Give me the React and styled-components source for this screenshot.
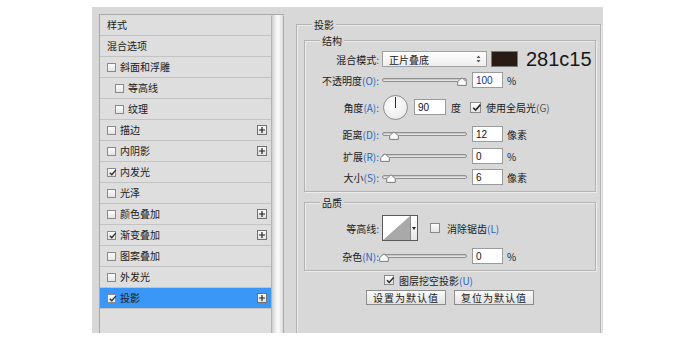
import React from "react";
import styled, { createGlobalStyle } from "styled-components";

const GlobalStyle = createGlobalStyle`
  html, body {
    margin: 0;
    padding: 0;
    background: #ffffff;
    font-family: "Noto Sans CJK SC", "Noto Sans", sans-serif;
    font-size: 10px;
    color: #1a1a1a;
  }
`;

const PANEL = "#d8d8d8";

const Page = styled.div`
  padding: 7px 0 0 92px;
  width: 690px;
  height: 345px;
  box-sizing: border-box;
`;

const Dialog = styled.div`
  width: 511px;
  height: 326px;
  background: ${PANEL};
  display: flex;
  align-items: flex-start;
  padding: 7px 0 0 7px;
  box-sizing: border-box;
  overflow: hidden;
`;

const ListBox = styled.div`
  display: flex;
  height: 330px;
  border-top: 1px solid #a8a8a8;
  border-left: 1px solid #a8a8a8;
  background: #dedede;
  flex-shrink: 0;
`;

const Items = styled.div`
  width: 171px;
  display: flex;
  flex-direction: column;
`;

const Item = styled.div`
  height: 20px;
  border-bottom: 1px solid #c3c3c3;
  display: flex;
  align-items: center;
  padding-left: ${p => (p.$indent ? 15 : 7)}px;
  padding-right: 4px;
  background: ${p => (p.$selected ? "#3a97f7" : "transparent")};
  line-height: 12px;
`;

const ItemText = styled.span`
  flex: 1;
  margin-left: ${p => (p.$box ? 4 : 0)}px;
  white-space: nowrap;
`;

const Scrollbar = styled.div`
  width: 11px;
  border-left: 1px solid #b3b3b3;
  border-right: 1px solid #a9a9a9;
  border-top-left-radius: 2px;
  border-top-right-radius: 2px;
  background: linear-gradient(to right, #cdcdcd, #f2f2f2 35%, #fbfbfb 60%, #dadada);
`;

const PlusBox = styled.span`
  width: 8px;
  height: 8px;
  border: 1px solid #707070;
  background: linear-gradient(#fbfbfb, #e1e1e1);
  display: flex;
  align-items: center;
  justify-content: center;
`;

const BoxWrap = styled.span`
  width: ${p => p.$size - 2}px;
  height: ${p => p.$size - 2}px;
  border: 1px solid #8a8a8a;
  background: linear-gradient(#fdfdfd, #e4e4e4);
  flex-shrink: 0;
  position: relative;
  display: inline-block;
`;

const CheckMark = styled.svg`
  position: absolute;
  left: 0;
  top: -1px;
`;

const Group = styled.div`
  position: relative;
  border: 1px solid #b2b2b2;
  box-shadow: inset 1px 1px 0 #ececec, 1px 1px 0 #ececec;
  margin-top: ${p => p.$mt || 0}px;
  padding: ${p => p.$pad};
  width: ${p => p.$w}px;
  height: ${p => (p.$h ? `${p.$h}px` : "auto")};
  box-sizing: border-box;
  flex-shrink: 0;
`;

const GroupTitle = styled.span`
  position: absolute;
  top: -7px;
  left: 15px;
  padding: 0 2px;
  background: ${PANEL};
  line-height: 13px;
`;

const Row = styled.div`
  display: flex;
  align-items: center;
  height: ${p => p.$h || 18}px;
  margin-top: ${p => p.$mt || 0}px;
  margin-left: ${p => p.$ml || 0}px;
  justify-content: ${p => p.$center ? "center" : "flex-start"};
  gap: ${p => p.$gap || 0}px;
`;

const Label = styled.span`
  width: 74px;
  margin-right: 3px;
  text-align: right;
  white-space: nowrap;
  flex-shrink: 0;
`;

const Key = styled.span`
  color: ${p => p.$c || "#2a64c0"};
`;

const Select = styled.div`
  width: 105px;
  height: 16px;
  box-sizing: border-box;
  border: 1px solid #a0a0a0;
  background: linear-gradient(#ffffff, #ededed);
  display: flex;
  align-items: center;
  justify-content: space-between;
  padding: 0 5px 0 6px;
`;

const Swatch = styled.div`
  width: 27px;
  height: 16px;
  margin-left: 4px;
  background: #281c15;
  box-sizing: border-box;
  border: 1px solid #7a7a7a;
`;

const HexText = styled.span`
  margin-left: 8px;
  font-family: "Liberation Sans", Arial, sans-serif;
  font-size: 20px;
  line-height: 20px;
  color: #161616;
`;

const SliderWrap = styled.div`
  position: relative;
  width: 85px;
  height: 16px;
  display: flex;
  align-items: center;
  flex-shrink: 0;
`;

const Track = styled.div`
  width: 100%;
  height: 4px;
  box-sizing: border-box;
  border: 1px solid #8f8f8f;
  border-radius: 2px;
  background: linear-gradient(#bdbdbd, #f1f1f1);
`;

const Handle = styled.svg`
  position: absolute;
  top: 5px;
`;

const Field = styled.div`
  width: ${p => p.$w || 31}px;
  height: 16px;
  box-sizing: border-box;
  border: 1px solid #9a9a9a;
  background: #ffffff;
  margin-left: ${p => p.$ml || 5}px;
  padding-left: 3px;
  display: flex;
  align-items: center;
  font-family: "Liberation Sans", Arial, sans-serif;
  font-size: 10px;
  color: ${p => p.$c || "#111"};
  flex-shrink: 0;
`;

const Unit = styled.span`
  margin-left: ${p => p.$ml || 4}px;
  white-space: nowrap;
`;

const Dial = styled.div`
  position: relative;
  width: 25px;
  height: 25px;
  margin-left: 1px;
  box-sizing: border-box;
  border-radius: 50%;
  border: 1px solid #8c8c8c;
  background: radial-gradient(circle at 40% 35%, #ffffff, #ececec 75%, #d6d6d6);
  flex-shrink: 0;

  &::after {
    content: "";
    position: absolute;
    left: 11px;
    top: 1px;
    width: 1px;
    height: 11px;
    background: #303030;
  }
`;

const Contour = styled.div`
  display: flex;
  height: 26px;
  box-sizing: border-box;
  border: 1px solid #5a5a5a;
  flex-shrink: 0;
`;

const ContourArrow = styled.div`
  width: 6px;
  border-left: 1px solid #8a8a8a;
  background: linear-gradient(#ffffff, #e6e6e6);
  display: flex;
  align-items: center;
  justify-content: center;
`;

const CheckText = styled.span`
  margin-left: ${p => p.$ml || 6}px;
  white-space: nowrap;
`;

const Button = styled.div`
  width: 80px;
  height: 15px;
  box-sizing: border-box;
  border: 1px solid #8c8c8c;
  background: linear-gradient(#fbfbfb, #e2e2e2);
  display: flex;
  align-items: center;
  justify-content: center;
  letter-spacing: 1px;
  line-height: 12px;
`;

const Checkbox = ({ checked, size = 9 }) => (
  <BoxWrap $size={size}>
    {checked && (
      <CheckMark width={size} height={size} viewBox="0 0 10 10">
        <path d="M2 5.2 L4.2 7.4 L8.6 2.4" fill="none" stroke="#2e2e2e" strokeWidth="1.5" />
      </CheckMark>
    )}
  </BoxWrap>
);

const Plus = () => (
  <PlusBox>
    <svg width="6" height="6" viewBox="0 0 6 6">
      <path d="M3 0 V6 M0 3 H6" stroke="#222" strokeWidth="1.2" />
    </svg>
  </PlusBox>
);

const Slider = ({ pos }) => (
  <SliderWrap>
    <Track />
    <Handle width="10" height="9" viewBox="0 0 10 9" style={{ left: pos - 5 }}>
      <path d="M5 0.8 L9.3 4.6 V8.4 H0.7 V4.6 Z" fill="#fafafa" stroke="#7c7c7c" strokeWidth="1" />
    </Handle>
  </SliderWrap>
);

const styles = [
  { name: "样式" },
  { name: "混合选项" },
  { name: "斜面和浮雕", box: true },
  { name: "等高线", box: true, indent: true },
  { name: "纹理", box: true, indent: true },
  { name: "描边", box: true, plus: true },
  { name: "内阴影", box: true, plus: true },
  { name: "内发光", box: true, checked: true },
  { name: "光泽", box: true },
  { name: "颜色叠加", box: true, plus: true },
  { name: "渐变叠加", box: true, checked: true, plus: true },
  { name: "图案叠加", box: true },
  { name: "外发光", box: true },
  { name: "投影", box: true, checked: true, plus: true, selected: true },
];

const StyleList = () => (
  <ListBox>
    <Items>
      {styles.map(s => (
        <Item key={s.name} $indent={s.indent} $selected={s.selected}>
          {s.box && <Checkbox checked={s.checked} />}
          <ItemText $box={s.box}>{s.name}</ItemText>
          {s.plus && <Plus />}
        </Item>
      ))}
    </Items>
    <Scrollbar />
  </ListBox>
);

export default function App() {
  return (
    <>
      <GlobalStyle />
      <Page>
        <Dialog>
          <StyleList />
          <Group $mt={10} $w={305} $h={330} $pad="15px 4px 0 7px" style={{ marginLeft: 12 }}>
            <GroupTitle>投影</GroupTitle>

            <Group $w={292} $pad="9px 0 5px 0">
              <GroupTitle>结构</GroupTitle>
              <Row>
                <Label>混合模式<Key>:</Key></Label>
                <Select>
                  <span>正片叠底</span>
                  <svg width="5" height="8" viewBox="0 0 5 8">
                    <path d="M2.5 0.5 L4.5 3 H0.5 Z M2.5 7.5 L4.5 5 H0.5 Z" fill="#555" />
                  </svg>
                </Select>
                <Swatch />
                <HexText>281c15</HexText>
              </Row>
              <Row $mt={3}>
                <Label>不透明度<Key>(O):</Key></Label>
                <Slider pos={80} />
                <Field $c="#1c2a8c">100</Field>
                <Unit>%</Unit>
              </Row>
              <Row $h={26} $mt={5}>
                <Label>角度<Key>(A):</Key></Label>
                <Dial />
                <Field $w={32} $ml={6}>90</Field>
                <Unit $ml={5}>度</Unit>
                <span style={{ width: 9 }} />
                <Checkbox checked size={11} />
                <CheckText $ml={5}>使用全局光<Key $c="#555">(G)</Key></CheckText>
              </Row>
              <Row $mt={5}>
                <Label>距离<Key>(D):</Key></Label>
                <Slider pos={12} />
                <Field>12</Field>
                <Unit>像素</Unit>
              </Row>
              <Row $mt={4}>
                <Label>扩展<Key>(R):</Key></Label>
                <Slider pos={3} />
                <Field>0</Field>
                <Unit>%</Unit>
              </Row>
              <Row $mt={3}>
                <Label>大小<Key>(S):</Key></Label>
                <Slider pos={9} />
                <Field>6</Field>
                <Unit>像素</Unit>
              </Row>
            </Group>

            <Group $w={292} $mt={10} $pad="12px 0 5px 0">
              <GroupTitle>品质</GroupTitle>
              <Row $h={26}>
                <Label>等高线<Key>:</Key></Label>
                <Contour>
                  <svg width="27" height="24" viewBox="0 0 27 24">
                    <rect width="27" height="24" fill="#ffffff" />
                    <path d="M0 24 L27 0 V24 Z" fill="#a9a9a9" />
                  </svg>
                  <ContourArrow>
                    <svg width="4" height="3" viewBox="0 0 4 3">
                      <path d="M0 0 H4 L2 3 Z" fill="#222" />
                    </svg>
                  </ContourArrow>
                </Contour>
                <span style={{ width: 12 }} />
                <Checkbox size={10} />
                <CheckText $ml={7}>消除锯齿<Key>(L)</Key></CheckText>
              </Row>
              <Row $mt={6}>
                <Label>杂色<Key>(N):</Key></Label>
                <Slider pos={2} />
                <Field>0</Field>
                <Unit>%</Unit>
              </Row>
            </Group>

            <Row $h={14} $mt={2} $ml={80}>
              <Checkbox checked size={10} />
              <CheckText $ml={5}>图层挖空投影<Key>(U)</Key></CheckText>
            </Row>
            <Row $h={15} $mt={3} $center $gap={8}>
              <Button>设置为默认值</Button>
              <Button>复位为默认值</Button>
            </Row>
          </Group>
        </Dialog>
      </Page>
    </>
  );
}
